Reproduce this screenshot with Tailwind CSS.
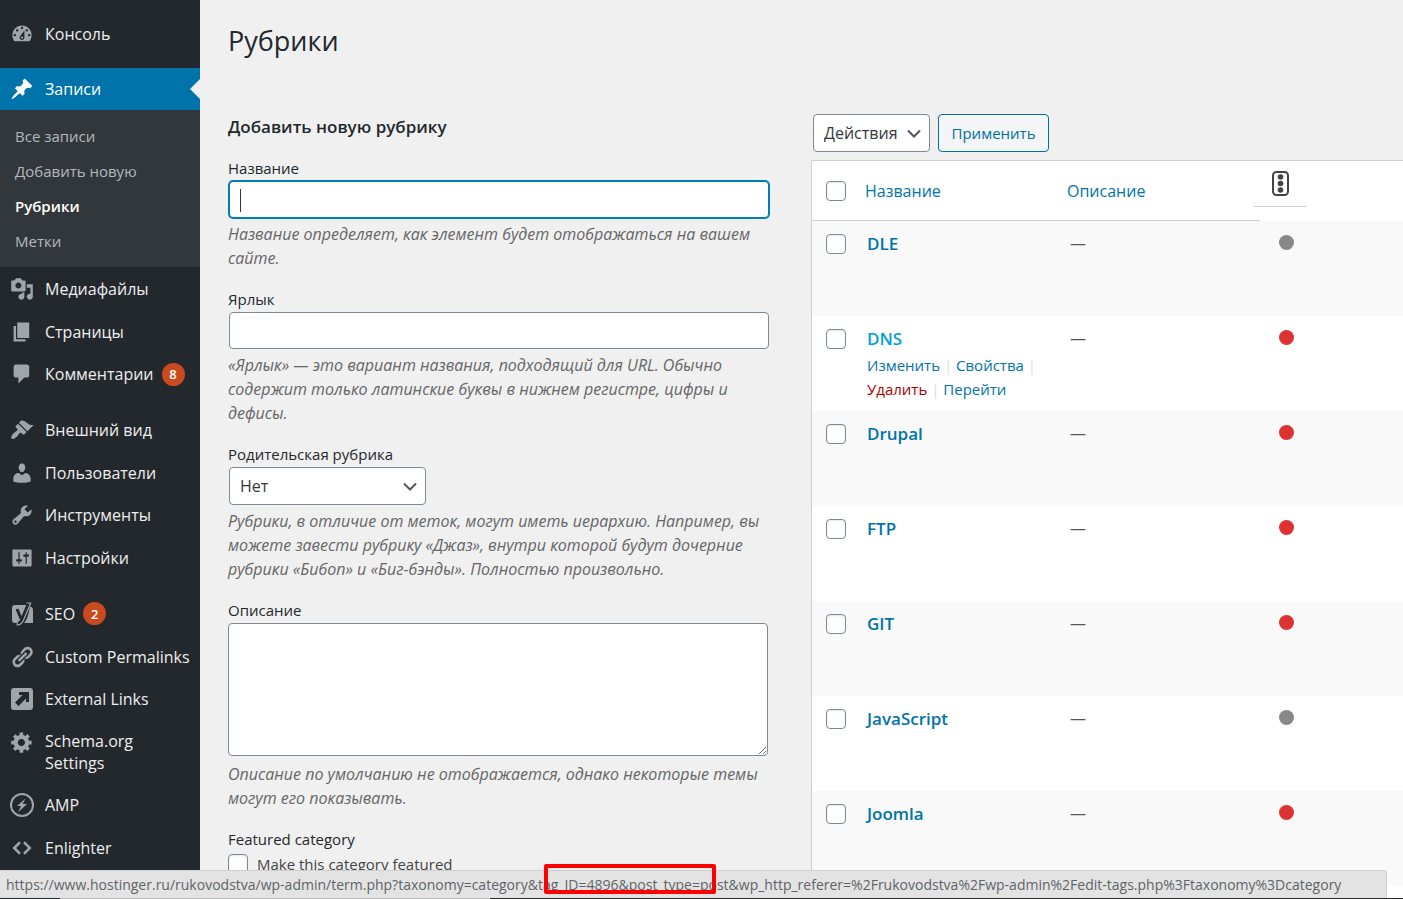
<!DOCTYPE html>
<html lang="ru">
<head>
<meta charset="utf-8">
<title>Рубрики</title>
<script src="https://cdn.jsdelivr.net/npm/@tailwindcss/browser@4"></script>
</head>
<body class="bg-[#f0f0f1] font-['Open_Sans','Noto_Sans',sans-serif] text-[15px] text-[#23282d]">
<div class="flex min-h-screen">

<nav aria-label="Меню" class="w-[200px] shrink-0 bg-[#23282d] pt-3 text-[16px] leading-[22px] text-[#eee]">
  <a href="#" class="flex h-[43px] items-center gap-[11px] pl-2.5"><svg class="size-6 shrink-0 fill-[#a0a5aa]" viewBox="0 0 20 20"><path fill-rule="evenodd" d="M3.76 16h12.48c1.1-1.37 1.76-3.11 1.76-5 0-4.42-3.58-8-8-8s-8 3.58-8 8c0 1.89.66 3.63 1.76 5zM10 4c.55 0 1 .45 1 1s-.45 1-1 1-1-.45-1-1 .45-1 1-1zM6 6c.55 0 1 .45 1 1s-.45 1-1 1-1-.45-1-1 .45-1 1-1zm8 0c.55 0 1 .45 1 1s-.45 1-1 1-1-.45-1-1 .45-1 1-1zm-5.37 5.55L12 7v6c0 1.1-.9 2-2 2s-2-.9-2-2c0-.57.24-1.08.63-1.45zM4 10c.55 0 1 .45 1 1s-.45 1-1 1-1-.45-1-1 .45-1 1-1zm12 0c.55 0 1 .45 1 1s-.45 1-1 1-1-.45-1-1 .45-1 1-1zm-5 3c0-.55-.45-1-1-1s-1 .45-1 1 .45 1 1 1 1-.45 1-1z"/></svg>Консоль</a>
  <a href="#" class="relative mt-[13px] flex h-[42px] items-center gap-[11px] bg-[#0073aa] pl-2.5 text-white"><svg class="size-6 shrink-0 fill-white" viewBox="0 0 20 20"><path d="M10.44 3.02l1.82-1.82 6.36 6.35-1.83 1.82c-1.05-.68-2.48-.57-3.41.36l-.75.75c-.92.93-1.04 2.35-.35 3.41l-1.83 1.82-2.41-2.41-2.8 2.79c-.42.42-3.38 2.71-3.8 2.29s1.86-3.39 2.28-3.81l2.79-2.79L4.1 9.36l1.83-1.82c1.05.69 2.48.57 3.4-.36l.75-.75c.93-.92 1.05-2.35.36-3.41z"/></svg>Записи<svg class="absolute top-[11px] right-0 h-5 w-2.5 fill-[#f0f0f1]" viewBox="0 0 10 20"><path d="M10 0v20L0 10z"/></svg></a>
  <div class="flex h-[157px] flex-col bg-[#32373c] pt-[9px] pl-[15px] text-[15px] text-[#b4b9be]">
    <a href="#" class="leading-[35px]">Все записи</a>
    <a href="#" class="leading-[35px]">Добавить новую</a>
    <a href="#" class="leading-[35px] font-semibold text-white">Рубрики</a>
    <a href="#" class="leading-[35px]">Метки</a>
  </div>
  <a href="#" class="flex h-[43px] items-center gap-[11px] pl-2.5"><svg class="size-6 shrink-0 fill-[#a0a5aa]" viewBox="0 0 20 20"><path fill-rule="evenodd" d="M13 11V4c0-.55-.45-1-1-1h-1.67L9 1H5L3.67 3H2c-.55 0-1 .45-1 1v7c0 .55.45 1 1 1h10c.55 0 1-.45 1-1zM7 4.5c1.38 0 2.5 1.12 2.5 2.5S8.38 9.5 7 9.5 4.5 8.38 4.5 7 5.62 4.5 7 4.5zM14 6h5v10.5c0 1.38-1.12 2.5-2.5 2.5S14 17.88 14 16.5s1.12-2.5 2.5-2.5c.17 0 .34.02.5.05V9h-3V6zm-4 8.05V13h2v3.5c0 1.38-1.12 2.5-2.5 2.5S7 17.88 7 16.5 8.12 14 9.5 14c.17 0 .34.02.5.05z"/></svg>Медиафайлы</a>
  <a href="#" class="flex h-[43px] items-center gap-[11px] pl-2.5"><svg class="size-6 shrink-0 fill-[#a0a5aa]" viewBox="0 0 20 20"><path d="M6 15V2h10v13H6zm-1 1h8v2H3V5h2v11z"/></svg>Страницы</a>
  <a href="#" class="flex h-[42px] items-center gap-[11px] pl-2.5"><svg class="size-6 shrink-0 fill-[#a0a5aa]" viewBox="0 0 20 20"><path d="M5 2h9c1.1 0 2 .9 2 2v7c0 1.1-.9 2-2 2h-2l-5 5v-5H5c-1.1 0-2-.9-2-2V4c0-1.1.9-2 2-2z"/></svg><span class="flex items-center gap-2">Комментарии<span class="flex size-[23px] items-center justify-center rounded-full bg-[#ca4a1f] text-[13px] font-semibold text-white">8</span></span></a>
  <a href="#" class="mt-[13px] flex h-[43px] items-center gap-[11px] pl-2.5"><svg class="size-6 shrink-0 fill-[#a0a5aa]" viewBox="0 0 20 20"><path d="M14.48 11.06L7.41 3.99l1.5-1.5c.5-.56 2.3-.47 3.51.32 1.21.8 1.43 1.28 2.91 2.1 1.18.64 2.45 1.26 4.45.85zm-.71.71L6.7 4.7 4.93 6.47c-.39.39-.39 1.02 0 1.41l1.06 1.06c.39.39.39 1.03 0 1.42-.6.6-1.43 1.11-2.21 1.69-.35.26-.7.53-1.01.84C1.43 14.23.4 16.08 1.4 17.07c.99 1 2.84-.03 4.18-1.36.31-.31.58-.66.85-1.02.57-.78 1.08-1.61 1.69-2.21.39-.39 1.02-.39 1.41 0l1.06 1.06c.39.39 1.02.39 1.41 0z"/></svg>Внешний вид</a>
  <a href="#" class="flex h-[43px] items-center gap-[11px] pl-2.5"><svg class="size-6 shrink-0 fill-[#a0a5aa]" viewBox="0 0 20 20"><path d="M10 9.25c-2.27 0-2.73-3.44-2.73-3.44C7 4.02 7.82 2 9.97 2c2.16 0 2.98 2.02 2.71 3.81 0 0-.41 3.44-2.68 3.44zm0 2.57L12.72 10c2.39 0 4.52 2.33 4.52 4.53v2.49s-3.65 1.13-7.24 1.13c-3.65 0-7.24-1.13-7.24-1.13v-2.49c0-2.25 1.94-4.48 4.47-4.48z"/></svg>Пользователи</a>
  <a href="#" class="flex h-[42px] items-center gap-[11px] pl-2.5"><svg class="size-6 shrink-0 fill-[#a0a5aa]" viewBox="0 0 20 20"><path fill-rule="evenodd" d="M16.68 9.77c-1.34 1.34-3.3 1.67-4.95.99l-5.41 6.52c-.99.99-2.59.99-3.58 0s-.99-2.59 0-3.57l6.52-5.42c-.68-1.65-.35-3.61.99-4.95 1.28-1.28 3.12-1.62 4.72-1.06l-2.89 2.89 2.82 2.82 2.86-2.87c.53 1.58.18 3.39-1.08 4.65zM3.81 16.21c.4.39 1.04.39 1.43 0 .4-.4.4-1.04 0-1.43-.39-.4-1.03-.4-1.43 0-.39.39-.39 1.03 0 1.43z"/></svg>Инструменты</a>
  <a href="#" class="flex h-[43px] items-center gap-[11px] pl-2.5"><svg class="size-6 shrink-0 fill-[#a0a5aa]" viewBox="0 0 20 20"><path fill-rule="evenodd" d="M18 16V4c0-.55-.45-1-1-1H3c-.55 0-1 .45-1 1v12c0 .55.45 1 1 1h14c.55 0 1-.45 1-1zM8 11h1c.55 0 1 .45 1 1s-.45 1-1 1H8v1.5c0 .28-.22.5-.5.5s-.5-.22-.5-.5V13H6c-.55 0-1-.45-1-1s.45-1 1-1h1V5.5c0-.28.22-.5.5-.5s.5.22.5.5V11zm5-2h-1c-.55 0-1-.45-1-1s.45-1 1-1h1V5.5c0-.28.22-.5.5-.5s.5.22.5.5V7h1c.55 0 1 .45 1 1s-.45 1-1 1h-1v5.5c0 .28-.22.5-.5.5s-.5-.22-.5-.5V9z"/></svg>Настройки</a>
  <a href="#" class="mt-[13px] flex h-[43px] items-center gap-[11px] pl-2.5"><svg class="size-6 shrink-0" viewBox="0 0 24 24"><path class="fill-[#a0a5aa]" d="M5 3h13l-6 18H5a3 3 0 0 1-3-3V6a3 3 0 0 1 3-3zM20 4.500c2 .5 3 1.500 3 3.500v13h-9c3-3 4-7 6-16.500z"/><path class="stroke-[#23282d] stroke-3" fill="none" d="M7 7l4 9.500M18.500 1.500L12 17c-1 3-2.500 4.500-5 4.800"/><path class="stroke-[#a0a5aa]" stroke-width="1.200" fill="none" d="M16.500 1h4.200L13.800 17.500c-1.200 3.200-3 5.300-6.500 5.500v-2.500"/></svg><span class="flex items-center gap-2">SEO<span class="flex size-[23px] items-center justify-center rounded-full bg-[#ca4a1f] text-[13px] font-semibold text-white">2</span></span></a>
  <a href="#" class="flex h-[43px] items-center gap-[11px] pl-2.5 whitespace-nowrap"><svg class="size-6 shrink-0 fill-[#a0a5aa]" viewBox="0 0 20 20"><path fill-rule="evenodd" d="M17.740 2.760c1.680 1.690 1.680 4.410 0 6.100l-1.530 1.520c-1.120 1.120-2.700 1.470-4.140 1.090l2.620-2.610.76-.77.76-.76c.84-.84.84-2.200 0-3.040-.84-.85-2.200-.85-3.040 0l-.77.76-3.380 3.380c-.37-1.440-.02-3.020 1.100-4.140l1.520-1.530c1.690-1.680 4.420-1.680 6.100 0zM8.590 13.430l5.340-5.340c.42-.42.42-1.100 0-1.520-.44-.43-1.130-.39-1.530 0l-5.330 5.340c-.42.42-.42 1.100 0 1.520.44.43 1.130.39 1.520 0zm-.76 2.290l4.140-4.150c.38 1.440.03 3.020-1.090 4.140l-1.520 1.530c-1.690 1.680-4.410 1.680-6.100 0-1.680-1.680-1.680-4.420 0-6.100l1.530-1.520c1.120-1.120 2.700-1.470 4.140-1.100l-4.140 4.150c-.85.84-.85 2.200 0 3.050.84.84 2.200.84 3.040 0z"/></svg>Custom Permalinks</a>
  <a href="#" class="flex h-[42px] items-center gap-[11px] pl-2.5"><svg class="size-6 shrink-0 fill-[#a0a5aa]" viewBox="0 0 24 24"><path fill-rule="evenodd" d="M4 1h16a3 3 0 0 1 3 3v16a3 3 0 0 1-3 3H4a3 3 0 0 1-3-3V4a3 3 0 0 1 3-3zM9 5v3h3.500L5 15.500 8.500 19 16 11.500V15h3V5z"/></svg>External Links</a>
  <a href="#" class="flex h-[64px] items-start gap-[11px] py-2.5 pl-2.5"><svg class="size-6 shrink-0 fill-[#a0a5aa]" viewBox="0 0 20 20"><path fill-rule="evenodd" d="M18 12h-2.180c-.17.7-.44 1.350-.81 1.930l1.540 1.540-2.100 2.100-1.540-1.540c-.58.36-1.230.63-1.910.79V19H8v-2.180c-.68-.16-1.330-.43-1.910-.79l-1.540 1.540-2.120-2.120 1.540-1.540c-.36-.58-.63-1.230-.79-1.910H1V9.030h2.170c.16-.7.44-1.350.8-1.940L2.430 5.550l2.100-2.100 1.540 1.540c.58-.37 1.240-.64 1.930-.81V2h3v2.180c.68.16 1.330.43 1.910.79l1.540-1.540 2.120 2.120-1.540 1.540c.36.59.64 1.240.8 1.940H18V12zm-8.500 1.500c1.660 0 3-1.340 3-3s-1.340-3-3-3-3 1.340-3 3 1.340 3 3 3z"/></svg><span>Schema.org<br>Settings</span></a>
  <a href="#" class="flex h-[42px] items-center gap-[11px] pl-2.5"><svg class="size-6 shrink-0" viewBox="0 0 24 24"><circle class="stroke-[#a0a5aa]" cx="12" cy="12" r="11" fill="none" stroke-width="2"/><path class="fill-[#a0a5aa]" d="M15.500 5.500L7 13h4l-3 6.500 9-8.500h-4.300z"/></svg>AMP</a>
  <a href="#" class="flex h-[43px] items-center gap-[11px] pl-2.5"><svg class="size-6 shrink-0 fill-[#a0a5aa]" viewBox="0 0 20 20"><path d="M9 6l-4 4 4 4-1.300 1.700L2 10l5.700-5.700zm2 8l4-4-4-4 1.300-1.700L18 10l-5.700 5.700z"/></svg>Enlighter</a>
</nav>

<main class="flex min-w-0 flex-1 flex-col pl-7">
  <h1 class="h-[114px] pt-5 text-[27px] leading-[41px]">Рубрики</h1>
  <div class="flex flex-1">
    <form class="w-[542px] shrink-0">
      <h2 class="text-[17px] leading-[26px] font-semibold">Добавить новую рубрику</h2>
      <div class="mt-[17px]">
        <label for="name" class="block leading-[23px]">Название</label>
        <div class="relative"><input id="name" type="text" class="m-px block h-[37px] w-[540px] rounded border border-[#007cba] bg-white px-2.5 ring-1 ring-[#007cba] outline-none"><span class="absolute top-2 left-3 h-[23px] w-px bg-[#32373c]"></span></div>
        <p class="mt-1 text-[16px] leading-6 whitespace-nowrap text-[#666] italic">Название определяет, как элемент будет отображаться на вашем<br>сайте.</p>
      </div>
      <div class="mt-[18px]">
        <label for="slug" class="block leading-[23px]">Ярлык</label>
        <input id="slug" type="text" class="m-px block h-[37px] w-[540px] rounded border border-[#7e8993] bg-white px-2.5">
        <p class="mt-1 text-[16px] leading-6 whitespace-nowrap text-[#666] italic">«Ярлык» — это вариант названия, подходящий для URL. Обычно<br>содержит только латинские буквы в нижнем регистре, цифры и<br>дефисы.</p>
      </div>
      <div class="mt-[18px]">
        <label for="parent" class="block leading-[23px]">Родительская рубрика</label>
        <div class="relative w-[198px]"><select id="parent" class="m-px block h-[38px] w-[197px] appearance-none rounded border border-[#7e8993] bg-white px-2.5 text-[16px] text-[#32373c]"><option>Нет</option></select><svg class="pointer-events-none absolute top-3.5 right-2 h-3 w-4 fill-none stroke-[#555] stroke-2" viewBox="0 0 16 12"><path d="M2 2.500l6 6 6-6"/></svg></div>
        <p class="mt-1 text-[16px] leading-6 whitespace-nowrap text-[#666] italic">Рубрики, в отличие от меток, могут иметь иерархию. Например, вы<br>можете завести рубрику «Джаз», внутри которой будут дочерние<br>рубрики «Бибоп» и «Биг-бэнды». Полностью произвольно.</p>
      </div>
      <div class="mt-[18px]">
        <label for="description" class="block leading-[23px]">Описание</label>
        <textarea id="description" class="my-px block h-[133px] w-[540px] rounded border border-[#7e8993] bg-white"></textarea>
        <p class="mt-1.5 text-[16px] leading-6 whitespace-nowrap text-[#666] italic">Описание по умолчанию не отображается, однако некоторые темы<br>могут его показывать.</p>
      </div>
      <div class="mt-[18px]">
        <div class="leading-[23px]">Featured category</div>
        <label class="mt-0.5 flex items-center gap-[9px] text-[#444]"><input type="checkbox" class="size-5 appearance-none rounded border border-[#7e8993] bg-white shadow-[inset_0_1px_2px_rgba(0,0,0,0.1)]">Make this category featured</label>
      </div>
    </form>

    <section class="ml-[41px] flex min-w-0 flex-1 flex-col">
      <div class="mb-2 ml-0.5 flex h-[38px] gap-2">
        <div class="relative w-[117px]"><select aria-label="Действия" class="h-full w-full appearance-none rounded border border-[#7e8993] bg-white px-2.5 text-[16px] text-[#32373c]"><option>Действия</option></select><svg class="pointer-events-none absolute top-3.5 right-2 h-3 w-4 fill-none stroke-[#555] stroke-2" viewBox="0 0 16 12"><path d="M2 2.500l6 6 6-6"/></svg></div>
        <button type="button" class="w-[111px] rounded border border-[#0071a1] bg-[#f3f5f6] text-[#0071a1]">Применить</button>
      </div>
      <div class="flex-1 border-t border-l border-[#ccd0d4] bg-white">
      <table class="w-full table-fixed border-separate border-spacing-0 text-left text-[#555]">
        <colgroup><col class="w-[43px]"><col class="w-[202px]"><col class="w-[203px]"><col></colgroup>
        <thead><tr class="h-[60px] text-[16px] text-[#0073aa]">
          <td class="border-b border-[#ccd0d4] pl-3.5"><input type="checkbox" aria-label="Выделить все" class="block size-5 appearance-none rounded border border-[#7e8993] bg-white shadow-[inset_0_1px_2px_rgba(0,0,0,0.1)]"></td>
          <th class="border-b border-[#ccd0d4] pl-2.5 font-normal"><a href="#">Название</a></th>
          <th class="border-b border-[#ccd0d4] pl-2.5 font-normal"><a href="#">Описание</a></th>
          <th class="align-top"><div class="-ml-1.5 flex h-[46px] w-[53px] justify-center border-b border-[#ccd0d4] pt-2.5"><svg class="h-[25px] w-[17px]" viewBox="0 0 17 25"><rect class="fill-none stroke-[#444] stroke-2" x="1" y="1" width="15" height="23" rx="3.500"/><g class="fill-[#444]"><circle cx="8.500" cy="6" r="2.800"/><circle cx="8.500" cy="12.500" r="2.800"/><circle cx="8.500" cy="19" r="2.800"/></g></svg></div></th>
        </tr></thead>
        <tbody id="rows"></tbody>
      </table>
      </div>
    </section>
  </div>
</main>
</div>

<div class="fixed inset-x-0 bottom-0 flex h-px"><i class="w-[60px] bg-[#1d2b2b]"></i><i class="w-[430px] bg-[#bbb]"></i><i class="flex-1 bg-[#2b2b2b]"></i></div>
<div class="fixed bottom-px left-0 h-7 w-[1387px] rounded-tr border-t border-r border-[#cfcfcf] bg-[#e3e3e3] pl-1.5 text-[14px] leading-[27px] whitespace-nowrap text-[#5f6368]">https://www.hostinger.ru/rukovodstva/wp-admin/term.php?taxonomy=category&amp;tag_ID=4896&amp;post_type=post&amp;wp_http_referer=%2Frukovodstva%2Fwp-admin%2Fedit-tags.php%3Ftaxonomy%3Dcategory</div>
<div class="fixed bottom-[5px] left-[544px] h-[30px] w-[172px] rounded-xs border-4 border-[#f00]"></div>

<template id="row"><tr class="h-[95px] align-top odd:bg-[#f9f9f9]">
  <td class="pt-[13px] pl-3.5"><input type="checkbox" class="block size-5 appearance-none rounded border border-[#7e8993] bg-white shadow-[inset_0_1px_2px_rgba(0,0,0,0.1)]"></td>
  <td class="pt-[11px] pl-3 whitespace-nowrap"><a href="#" class="name block text-[17px] leading-6 font-semibold text-[#0073aa]"></a></td>
  <td class="pt-2.5 pl-[13px] leading-6 text-[16px]">—</td>
  <td class="pt-3.5 pl-[19px]"><div class="dot size-[15px] rounded-full"></div></td>
</tr></template>
<template id="actions"><div class="mt-0.5 leading-6 text-[#ddd]"><a href="#" class="text-[#0073aa]">Изменить</a> | <a href="#" class="text-[#0073aa]">Свойства</a> |<br><a href="#" class="text-[#a00]">Удалить</a> | <a href="#" class="text-[#0073aa]">Перейти</a></div></template>
<script>
const rows = [['DLE', 0], ['DNS', 1], ['Drupal', 1], ['FTP', 1], ['GIT', 1], ['JavaScript', 0], ['Joomla', 1]];
for (const [name, red] of rows) {
  const r = document.getElementById('row').content.cloneNode(true);
  const link = r.querySelector('.name');
  link.textContent = name;
  r.querySelector('input').setAttribute('aria-label', name);
  r.querySelector('.dot').classList.add(red ? 'bg-[#dc3232]' : 'bg-[#888888]');
  if (name === 'DNS') {
    link.classList.replace('text-[#0073aa]', 'text-[#00a0d2]');
    link.after(document.getElementById('actions').content.cloneNode(true));
  }
  document.getElementById('rows').append(r);
}
</script>
</body>
</html>
